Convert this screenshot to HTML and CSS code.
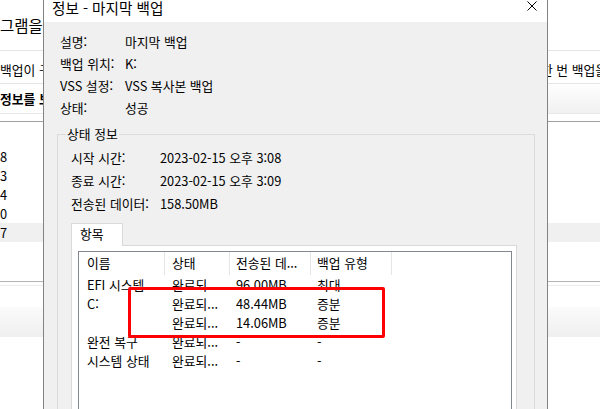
FILE: index.html
```html
<!DOCTYPE html>
<html lang="ko">
<head>
    <meta charset="UTF-8">
    <meta name="viewport" content="width=device-width, initial-scale=1.0">
    <title>정보 - 마지막 백업</title>

    <link rel="stylesheet" href="styles.css">
</head>
<body>
    <div class="desktop">
        <div class="bg-window">
            <div class="bg-head"><span class="bg-title">그램을 사용하여 백업</span></div>
            <div class="bg-row">
                <span class="bg-left">백업이 구성되어 있습니다</span>
                <span class="bg-right">한 번 백업을</span>
            </div>
            <div class="bg-row2">
                <span class="bg-bold">정보를 보려면</span>
                <span class="bg-grad"></span>
            </div>
            <div class="bg-gap"></div>
            <div class="bg-list">
                <div class="bg-item">8</div>
                <div class="bg-item">3</div>
                <div class="bg-item">4</div>
                <div class="bg-item">0</div>
                <div class="bg-item sel">7</div>
            </div>
            <div class="bg-foot"></div>
            <div class="bg-band"></div>
        </div>

        <div class="dialog">
            <div class="titlebar">
                <span class="title">정보 - 마지막 백업</span>
                <svg class="close" width="10" height="10" viewBox="0 0 10 10">
                    <path d="M0.5 0.5 L9.5 9.5 M9.5 0.5 L0.5 9.5" stroke="#000" stroke-width="1" fill="none"/>
                </svg>
            </div>

            <div class="info">
                <div class="info-row"><span class="info-label">설명:</span><span>마지막 백업</span></div>
                <div class="info-row"><span class="info-label">백업 위치:</span><span>K:</span></div>
                <div class="info-row"><span class="info-label">VSS 설정:</span><span>VSS 복사본 백업</span></div>
                <div class="info-row"><span class="info-label">상태:</span><span>성공</span></div>
            </div>

            <fieldset class="group">
                <legend>상태 정보</legend>
                <div class="stat-row"><span class="stat-label">시작 시간:</span><span>2023-02-15 오후 3:08</span></div>
                <div class="stat-row"><span class="stat-label">종료 시간:</span><span>2023-02-15 오후 3:09</span></div>
                <div class="stat-row"><span class="stat-label">전송된 데이터:</span><span>158.50MB</span></div>

                <div class="tabs">
                    <div class="tab">항목</div>
                    <div class="tab-panel">
                        <div class="listview">
                            <div class="lv-head">
                                <span class="c1">이름</span>
                                <span class="c2">상태</span>
                                <span class="c3">전송된 데...</span>
                                <span class="c4">백업 유형</span>
                            </div>
                            <div class="lv-row">
                                <span class="c1">EFI 시스템 ...</span>
                                <span class="c2">완료되...</span>
                                <span class="c3">96.00MB</span>
                                <span class="c4">최대</span>
                            </div>
                            <div class="lv-row">
                                <span class="c1">C:</span>
                                <span class="c2">완료되...</span>
                                <span class="c3">48.44MB</span>
                                <span class="c4">증분</span>
                            </div>
                            <div class="lv-row">
                                <span class="c1"></span>
                                <span class="c2">완료되...</span>
                                <span class="c3">14.06MB</span>
                                <span class="c4">증분</span>
                            </div>
                            <div class="lv-row">
                                <span class="c1">완전 복구</span>
                                <span class="c2">완료되...</span>
                                <span class="c3">-</span>
                                <span class="c4">-</span>
                            </div>
                            <div class="lv-row">
                                <span class="c1">시스템 상태</span>
                                <span class="c2">완료되...</span>
                                <span class="c3">-</span>
                                <span class="c4">-</span>
                            </div>
                            <div class="highlight"></div>
                        </div>
                    </div>
                </div>
            </fieldset>
        </div>
    </div>
</body>
</html>
```

FILE: styles.css
```css
* {
    box-sizing: border-box;
}

body {
    margin: 0;
    width: 600px;
    height: 409px;
    overflow: hidden;
    background-color: #fff;
    color: #000;
    font-family: "Noto Sans CJK KR", "Noto Sans", sans-serif;
    font-size: 12.8px;
    line-height: 16px;
}

.desktop {
    position: relative;
    height: 409px;
    overflow: hidden;
}

/* window behind the dialog */
.bg-head {
    height: 51px;
    border-bottom: 1px solid #e5e5e5;
    display: flex;
    align-items: center;
}

.bg-title {
    font-size: 15.5px;
    white-space: nowrap;
}

.bg-row {
    height: 33px;
    padding-top: 6px;
    border-bottom: 1px solid #e5e5e5;
    display: flex;
    align-items: center;
}

.bg-left {
    flex: 1;
    white-space: nowrap;
    overflow: hidden;
}

.bg-right {
    width: 59px;
    white-space: nowrap;
    overflow: hidden;
}

.bg-row2 {
    height: 30px;
    border-bottom: 1px solid #e8e8e8;
    display: flex;
}

.bg-bold {
    width: 300px;
    padding-top: 7px;
    font-weight: bold;
    white-space: nowrap;
}

.bg-grad {
    flex: 1;
    background: linear-gradient(#ffffff, #f0f0f0);
}

.bg-gap {
    height: 8px;
    border-bottom: 1px solid #a0a0a0;
}

.bg-list {
    padding-top: 25px;
}

.bg-item {
    height: 19px;
    line-height: 19px;
}

.bg-item.sel {
    background-color: #f0f0f0;
}

.bg-foot {
    margin-top: 39px;
    height: 5px;
    border-top: 1px solid #b4b4b4;
    border-bottom: 1px solid #ececec;
}

.bg-band {
    margin-top: 21px;
    height: 30px;
    background: linear-gradient(#fbfbfb, #efefef);
}

/* dialog */
.dialog {
    position: absolute;
    left: 43px;
    top: 0;
    width: 505px;
    height: 480px;
    border-left: 1px solid #838383;
    border-right: 1px solid #838383;
    background-color: #f0f0f0;
    display: flex;
    flex-direction: column;
}

.titlebar {
    flex-shrink: 0;
    height: 22px;
    background-color: #fff;
    display: flex;
    justify-content: space-between;
    align-items: flex-start;
    padding: 0 10px 0 8px;
}

.title {
    font-size: 14.6px;
    line-height: 15px;
}

.close {
    margin-top: 1px;
}

.info {
    flex-shrink: 0;
    padding: 9px 0 0 16px;
}

.info-row {
    height: 22px;
    display: flex;
    align-items: center;
}

.info-label {
    width: 65px;
}

.group {
    flex: 1;
    min-width: 0;
    margin: 7px 12px 0 13px;
    padding: 0 13px;
    border: 1px solid #dcdcdc;
}

.group legend {
    margin-left: -5px;
    padding: 0 1px;
    line-height: 16px;
}

.stat-row {
    height: 23px;
    display: flex;
    align-items: center;
}

.stat-row:first-of-type {
    margin-top: 4px;
}

.stat-label {
    width: 89px;
}

.tabs {
    margin: 8px 4px 0 0;
}

.tab {
    position: relative;
    width: 52px;
    height: 23px;
    margin-bottom: -1px;
    padding: 2px 0 0 8px;
    border: 1px solid #d9d9d9;
    border-bottom: none;
    background-color: #fff;
}

.tab-panel {
    border: 1px solid #d9d9d9;
    background-color: #fff;
    padding: 5px 4px 0 6px;
    height: 200px;
}

.listview {
    position: relative;
    height: 190px;
    border: 1px solid #828790;
    background-color: #fff;
}

.lv-head, .lv-row {
    display: flex;
    white-space: nowrap;
}

.lv-head {
    height: 23px;
}

.lv-head span {
    border-right: 1px solid #e5e5e5;
    padding-top: 3px;
}

.lv-row {
    height: 19px;
    line-height: 19px;
}

.c1 {
    width: 86px;
    padding-left: 8px;
}

.c2 {
    width: 65px;
    padding-left: 7px;
}

.c3 {
    width: 81px;
    padding-left: 6px;
}

.c4 {
    width: 81px;
    padding-left: 6px;
}

.highlight {
    position: absolute;
    left: 49px;
    top: 35px;
    width: 257px;
    height: 51px;
    border: 3px solid #ff0000;
    border-radius: 2px;
}
```
